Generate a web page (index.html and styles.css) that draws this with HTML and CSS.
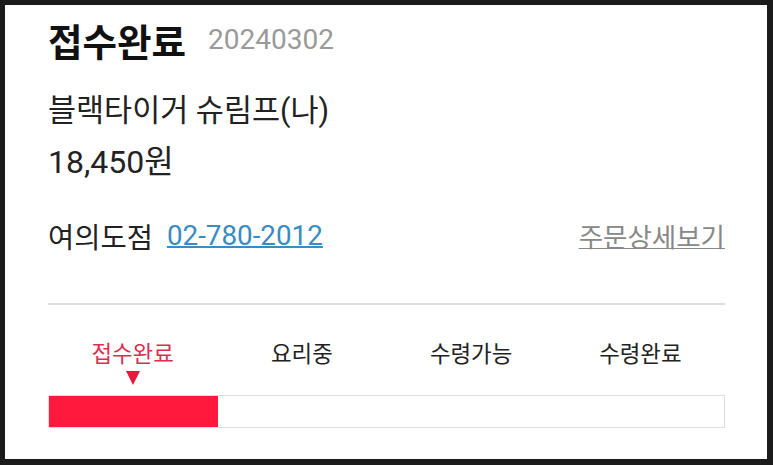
FILE: index.html
```html
<!DOCTYPE html>
<html lang="ko">
  <head>
    <meta charset="UTF-8" />
    <meta name="viewport" content="width=device-width, initial-scale=1.0" />
    <title>주문 상태</title>
    <link rel="stylesheet" href="styles.css">
  </head>
  <body>
    <div class="card">
      <div class="order-head">
        <h2 class="status">접수완료</h2>
        <span class="order-date">20240302</span>
      </div>
      <p class="menu-name">블랙타이거 슈림프(나)</p>
      <p class="price">18,450원</p>
      <div class="store-row">
        <span class="store-name">여의도점</span>
        <a href="#" class="store-phone">02-780-2012</a>
        <a href="#" class="detail-link">주문상세보기</a>
      </div>
      <div class="progress">
        <div class="steps">
          <div class="step active">접수완료</div>
          <div class="step">요리중</div>
          <div class="step">수령가능</div>
          <div class="step">수령완료</div>
        </div>
        <div class="bar">
          <div class="bar-fill" style="width: 25%"></div>
        </div>
      </div>
    </div>
  </body>
</html>
```

FILE: styles.css
```css
body {
  margin: 0;
  padding: 5px 6px 6px 5px;
  background-color: #1b1b1b;
  font-family: Roboto, "Noto Sans CJK KR", sans-serif;
  color: #1a1a1a;
}
.card {
  background-color: #fff;
  height: 454px;
  box-sizing: border-box;
  padding: 14px 42px 0 43px;
}
.order-head {
  display: flex;
  align-items: center;
  height: 41px;
}
.status {
  margin: 0;
  font-size: 37.5px;
  font-weight: 700;
  color: #111;
}
.order-date {
  margin-left: 22px;
  font-size: 28px;
  color: #9a9a9a;
}
.menu-name {
  margin: 31px 0 0;
  font-size: 30.5px;
  line-height: 40px;
  color: #222;
}
.price {
  margin: 11px 0 0;
  font-size: 32px;
  line-height: 40px;
  color: #222;
}
.store-row {
  display: flex;
  align-items: center;
  margin-top: 33px;
  height: 40px;
}
.store-name {
  font-size: 28.5px;
  color: #222;
}
.store-phone {
  margin-left: 14px;
  font-size: 27.8px;
  color: #3a8cc0;
  text-decoration-thickness: 2px;
}
.detail-link {
  margin-left: auto;
  font-size: 26.5px;
  color: #888;
  text-decoration-thickness: 1px;
}
.progress {
  margin-top: 48px;
  border-top: 2px solid #ddd;
  padding-top: 34px;
}
.steps {
  display: grid;
  grid-template-columns: repeat(4, 1fr);
}
.step {
  text-align: center;
  font-size: 22.4px;
  line-height: 30px;
  color: #222;
  position: relative;
}
.step.active {
  color: #d9304f;
}
.step.active::after {
  content: "";
  position: absolute;
  left: 50%;
  top: 32px;
  margin-left: -7px;
  border-left: 7px solid transparent;
  border-right: 7px solid transparent;
  border-top: 14px solid #e8183c;
}
.bar {
  margin-top: 26px;
  height: 31px;
  border: 1px solid #ddd;
}
.bar-fill {
  height: 100%;
  background-color: #ff1a3d;
}
```
